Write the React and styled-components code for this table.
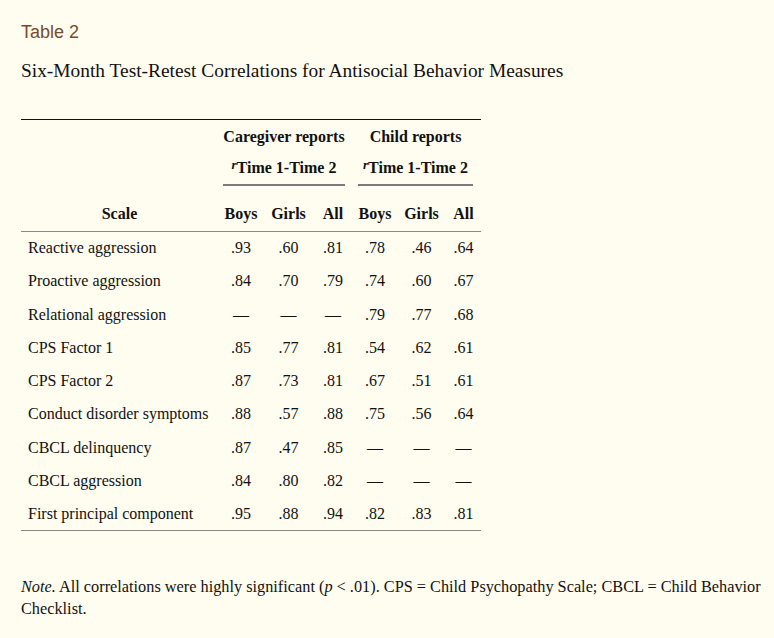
import React from 'react';
import styled, {createGlobalStyle} from 'styled-components';

const GlobalStyle = createGlobalStyle`
    html, body {
        margin: 0;
        padding: 0;
        background: #fffdf0;
    }
    body {
        font-family: "Liberation Serif", "Times New Roman", serif;
        font-size: 16px;
        color: #111;
    }
`;

const Page = styled.div`
    padding: 20px 21px 0 21px;
    background: #fffdf0;
    min-height: 638px;
    box-sizing: border-box;
`;
const TableLabel = styled.div`
    font-family: "Liberation Sans", Arial, sans-serif;
    font-size: 18px;
    line-height: 24px;
    color: #7a4a28;
`;
const TableTitle = styled.div`
    font-size: 19.4px;
    line-height: 24px;
    margin-top: 15px;
`;
const Table = styled.table`
    margin-top: 36px;
    width: 460px;
    table-layout: fixed;
    border-collapse: collapse;
    border-top: 1px solid #111;
    border-bottom: 1px solid #888;
`;
const GroupCell = styled.th`
    padding: 0 8px 0 5px;
    font-weight: bold;
    vertical-align: top;
`;
const GroupBox = styled.div`
    line-height: 31px;
    padding: 1px 0 0;
    border-bottom: 2px solid #7a7a7a;
    text-align: center;
    white-space: nowrap;
`;
const StatR = styled.i`
    font-size: 13px;
    position: relative;
    top: -4px;
`;
const HeadRow = styled.tr`
    border-bottom: 1px solid #888;
`;
const HeadCell = styled.th`
    padding: 19px 0 8px;
    line-height: 18px;
    font-weight: bold;
    text-align: center;
    white-space: nowrap;
`;
const Row = styled.tr`
    height: 33.25px;
`;
const ScaleCell = styled.td`
    padding: 0 0 0 7px;
    text-align: left;
    white-space: nowrap;
    vertical-align: middle;
`;
const ValueCell = styled.td`
    padding: 0;
    text-align: center;
    vertical-align: middle;
`;
const Note = styled.p`
    margin: 45px 0 0;
    font-size: 16.3px;
    line-height: 22px;
    width: 745px;
`;

const rows = [
    ['Reactive aggression', '.93', '.60', '.81', '.78', '.46', '.64'],
    ['Proactive aggression', '.84', '.70', '.79', '.74', '.60', '.67'],
    ['Relational aggression', '—', '—', '—', '.79', '.77', '.68'],
    ['CPS Factor 1', '.85', '.77', '.81', '.54', '.62', '.61'],
    ['CPS Factor 2', '.87', '.73', '.81', '.67', '.51', '.61'],
    ['Conduct disorder symptoms', '.88', '.57', '.88', '.75', '.56', '.64'],
    ['CBCL delinquency', '.87', '.47', '.85', '—', '—', '—'],
    ['CBCL aggression', '.84', '.80', '.82', '—', '—', '—'],
    ['First principal component', '.95', '.88', '.94', '.82', '.83', '.81'],
];

const widths = [197, 46, 49, 40, 44, 49, 35];

export default function App() {
    return <Page>
        <GlobalStyle />
        <TableLabel>Table 2</TableLabel>
        <TableTitle>Six-Month Test-Retest Correlations for Antisocial Behavior Measures</TableTitle>
        <Table>
            <colgroup>
                {widths.map((w, i) => <col key={i} style={{width: w}} />)}
            </colgroup>
            <thead>
                <tr>
                    <th></th>
                    <GroupCell colSpan={3}>
                        <GroupBox>
                            Caregiver reports<br />
                            <StatR>r</StatR>Time 1-Time 2
                        </GroupBox>
                    </GroupCell>
                    <GroupCell colSpan={3}>
                        <GroupBox>
                            Child reports<br />
                            <StatR>r</StatR>Time 1-Time 2
                        </GroupBox>
                    </GroupCell>
                </tr>
                <HeadRow>
                    <HeadCell>Scale</HeadCell>
                    <HeadCell>Boys</HeadCell>
                    <HeadCell>Girls</HeadCell>
                    <HeadCell>All</HeadCell>
                    <HeadCell>Boys</HeadCell>
                    <HeadCell>Girls</HeadCell>
                    <HeadCell>All</HeadCell>
                </HeadRow>
            </thead>
            <tbody>
                {rows.map(r => <Row key={r[0]}>
                    <ScaleCell>{r[0]}</ScaleCell>
                    {r.slice(1).map((v, i) => <ValueCell key={i}>{v}</ValueCell>)}
                </Row>)}
            </tbody>
        </Table>
        <Note>
            <i>Note.</i> All correlations were highly significant (<i>p</i> &lt; .01). CPS = Child Psychopathy Scale; CBCL = Child Behavior Checklist.
        </Note>
    </Page>
}
